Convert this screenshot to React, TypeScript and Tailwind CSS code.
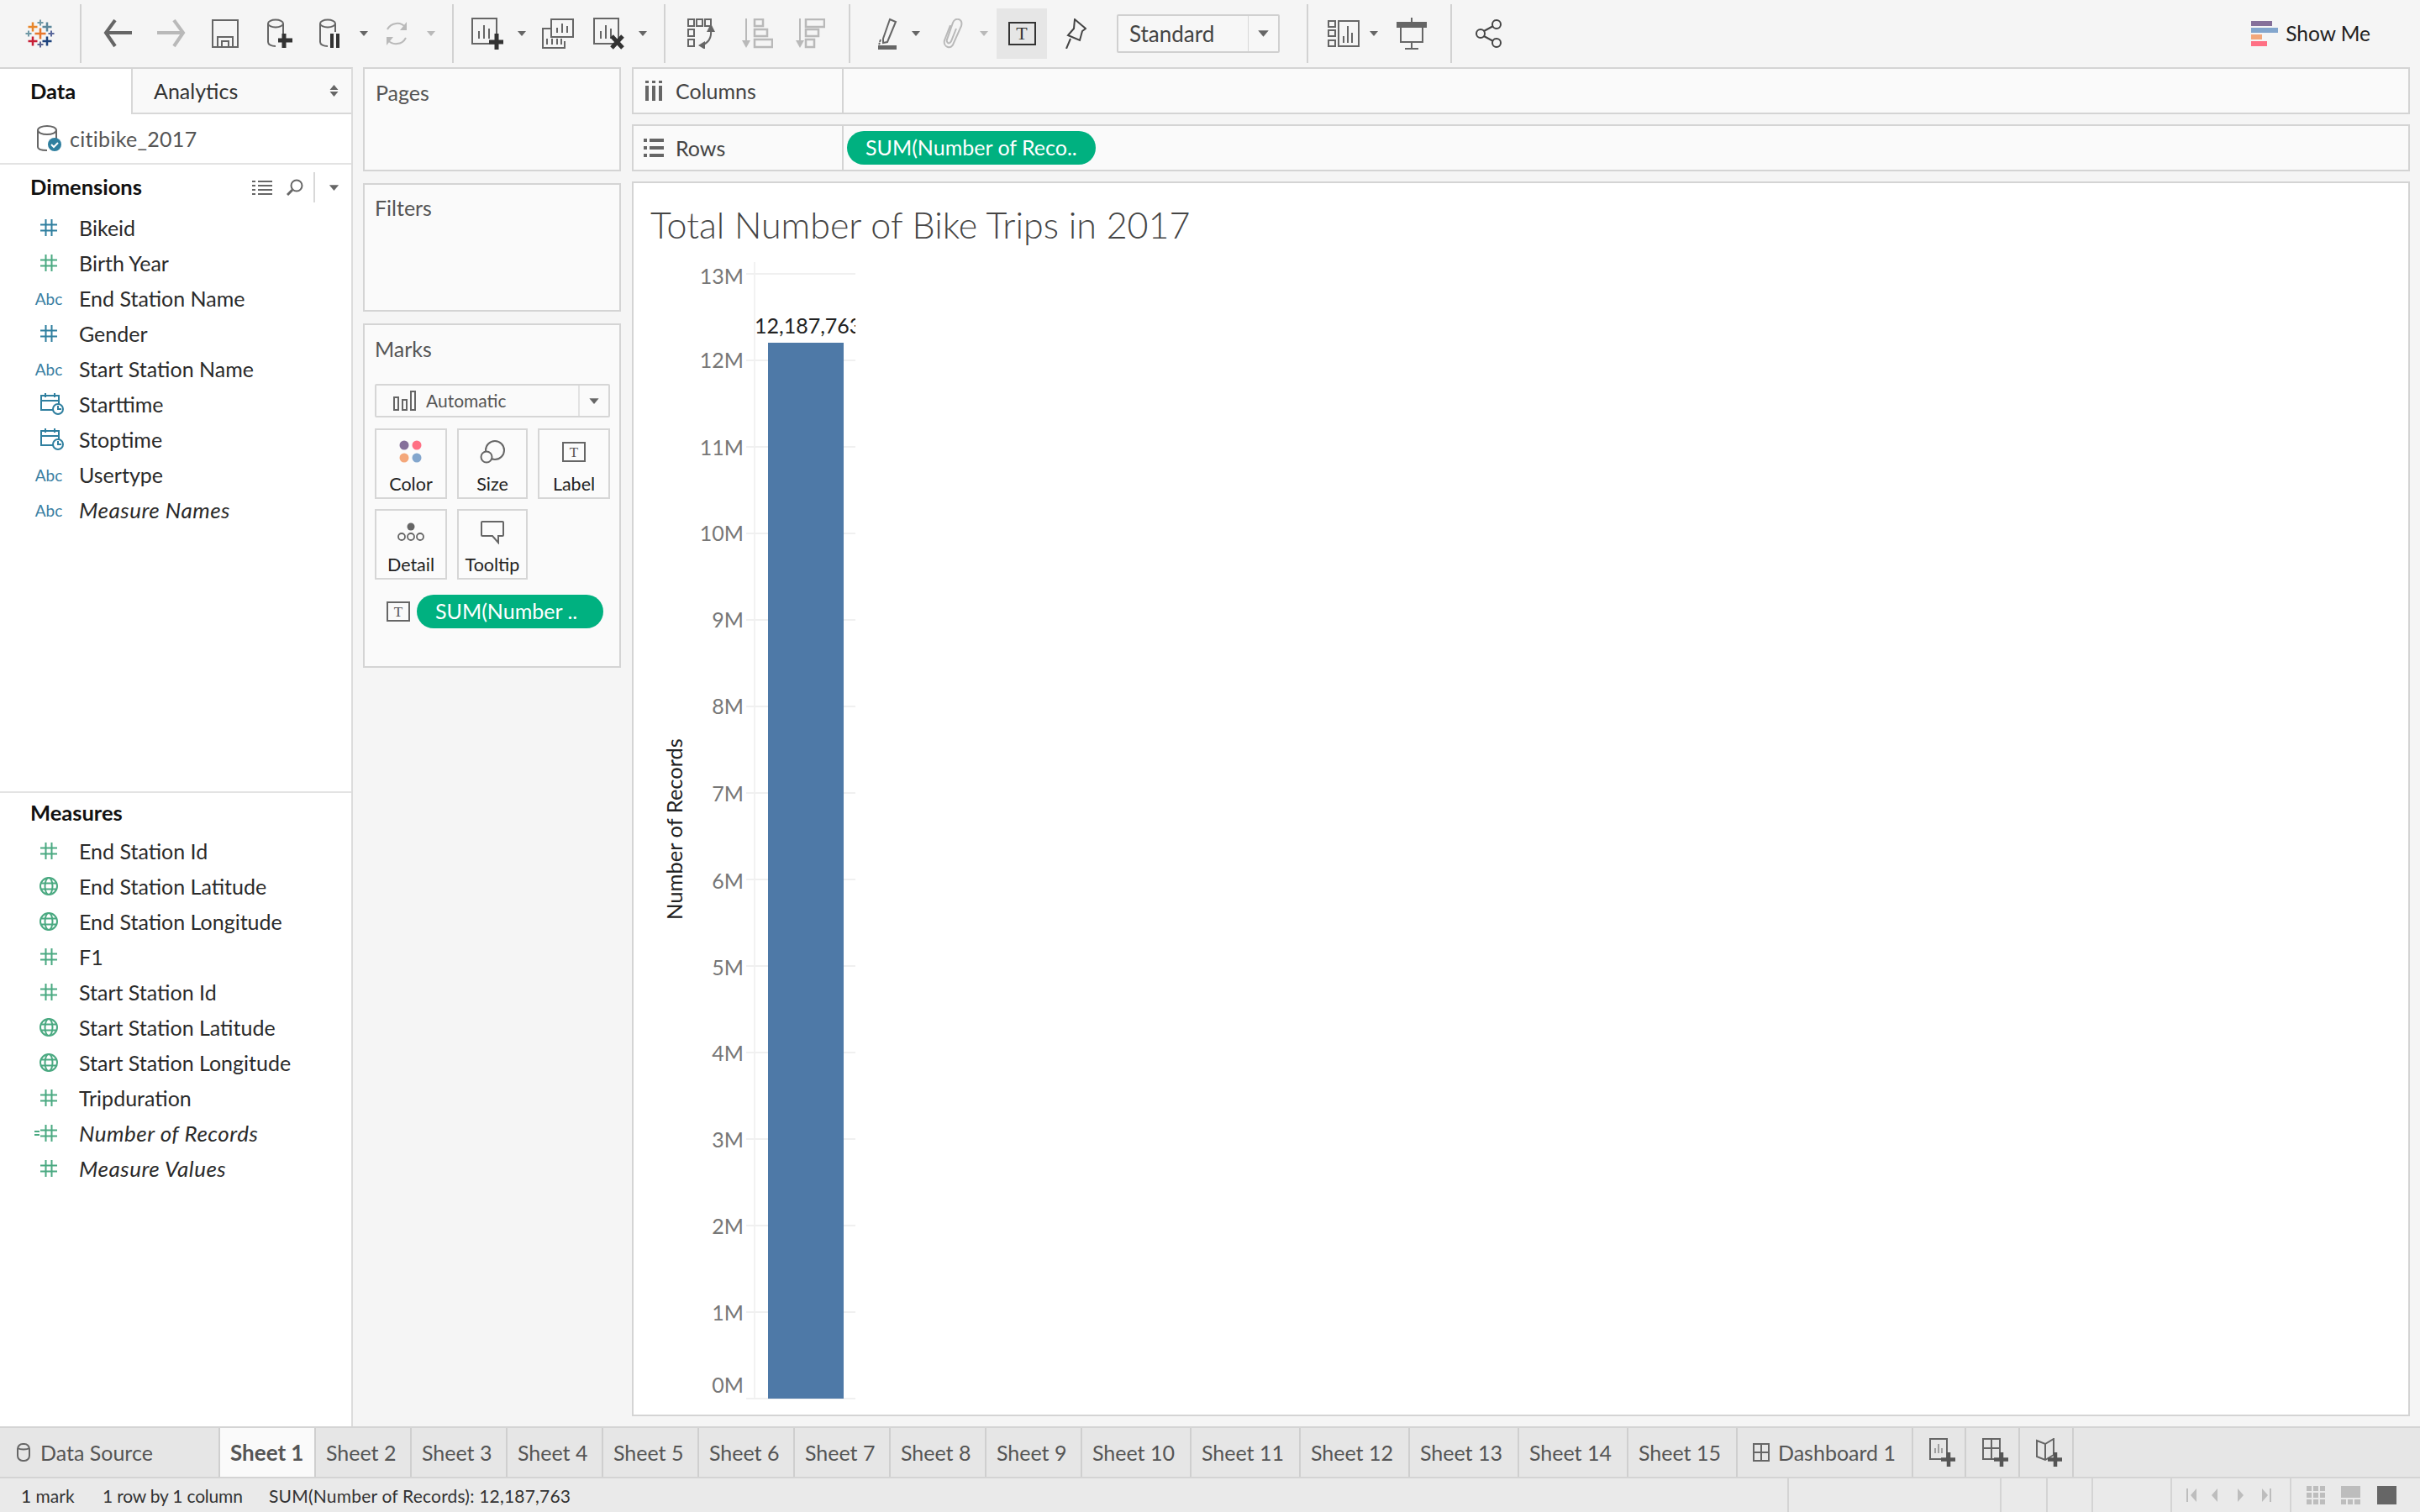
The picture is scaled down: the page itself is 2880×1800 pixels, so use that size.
import React from "react";

const G = "#666666";
const L = "#b9b9b9";

function Caret({ c = G, cls = "" }: { c?: string; cls?: string }) {
  return (
    <svg width="10" height="8" viewBox="0 0 10 8" className={cls}>
      <path d="M0 1h10L5 7z" fill={c} />
    </svg>
  );
}
function Sep({ cls }: { cls: string }) {
  return <div className={"w-[2px] h-[70px] bg-[#d2d2d2] shrink-0 " + cls} />;
}
function Plus({ x, y, r, c, w = 2.5 }: { x: number; y: number; r: number; c: string; w?: number }) {
  return <path d={`M${x - r} ${y}h${2 * r}M${x} ${y - r}v${2 * r}`} stroke={c} strokeWidth={w} fill="none" />;
}
function Logo() {
  return (
    <svg width="36" height="36" viewBox="30 22 36 36" className="ml-[30px] shrink-0">
      <Plus x={48} y={27} r={3.5} c="#7199a6" w={2} />
      <Plus x={39} y={32} r={5.5} c="#e8862b" />
      <Plus x={56} y={32} r={5.5} c="#5b879b" />
      <Plus x={34} y={40} r={3.5} c="#7099a6" w={2} />
      <Plus x={48} y={40} r={6.5} c="#e8762b" />
      <Plus x={61} y={40} r={3.5} c="#59679b" w={2} />
      <Plus x={39} y={49} r={5.5} c="#c72037" />
      <Plus x={56} y={49} r={5.5} c="#1f447e" />
      <Plus x={48} y={53} r={3.5} c="#5b6591" w={2} />
    </svg>
  );
}
function Arrow({ c, flip, cls }: { c: string; flip?: boolean; cls: string }) {
  return (
    <svg width="34" height="34" viewBox="0 0 34 34" className={"shrink-0 " + cls} style={flip ? { transform: "scaleX(-1)" } : undefined}>
      <path d="M34 16H4M14 1L3 16l11 16" stroke={c} strokeWidth="4" fill="none" />
    </svg>
  );
}
function Cyl({ children }: { children: React.ReactNode }) {
  return (
    <svg width="34" height="36" viewBox="0 0 34 36" className="block">
      <ellipse cx="10" cy="6" rx="9" ry="4.5" fill="none" stroke={G} strokeWidth="2" />
      <path d="M1 6v22c0 3 4 5 9 5M19 6v14" fill="none" stroke={G} strokeWidth="2" />
      {children}
    </svg>
  );
}
function Sheet({ children, cls }: { children: React.ReactNode; cls: string }) {
  return (
    <svg width="38" height="38" viewBox="0 0 38 38" className={"shrink-0 " + cls}>
      <rect x="1" y="1" width="29" height="30" fill="none" stroke={G} strokeWidth="2" />
      <path d="M9 25v-9M15 25V9M21 25v-12" stroke={G} strokeWidth="2" />
      {children}
    </svg>
  );
}

function Toolbar() {
  return (
    <div className="h-[80px] flex items-center bg-[#f5f5f5] shrink-0">
      <Logo />
      <Sep cls="ml-[29px]" />
      <Arrow c={G} cls="ml-[26px]" />
      <Arrow c={L} flip cls="ml-[30px]" />
      <svg width="32" height="34" viewBox="0 0 32 34" className="ml-[31px] shrink-0">
        <rect x="1" y="1" width="30" height="32" fill="none" stroke={G} strokeWidth="2" />
        <path d="M7 32V21h18v11M12 32v-6h8v6" fill="none" stroke={G} strokeWidth="2" />
      </svg>
      <div className="ml-[34px] w-[30px] shrink-0">
        <Cyl>
          <path d="M20 18v17M13 26h17" stroke="#333" strokeWidth="5" />
        </Cyl>
      </div>
      <div className="ml-[32px] w-[24px] shrink-0">
        <svg width="26" height="36" viewBox="0 0 26 36" className="block">
          <ellipse cx="10" cy="6" rx="9" ry="4.5" fill="none" stroke={G} strokeWidth="2" />
          <path d="M1 6v22c0 3 4 5 9 5M19 6v10" fill="none" stroke={G} strokeWidth="2" />
          <path d="M15 18v17M22 18v17" stroke="#333" strokeWidth="4" />
        </svg>
      </div>
      <Caret cls="ml-[24px] shrink-0" />
      <svg width="32" height="32" viewBox="0 0 32 32" className="ml-[18px] shrink-0">
        <path d="M5 11A13 13 0 0 1 27 9M27 21A13 13 0 0 1 5 23" fill="none" stroke={L} strokeWidth="2" />
        <path d="M28 2v10h-8zM4 30V20h8z" fill={L} />
      </svg>
      <Caret c={L} cls="ml-[20px] shrink-0" />
      <Sep cls="ml-[20px]" />
      <Sheet cls="ml-[21px]">
        <path d="M30 19v19M21 29h17" stroke="#333" strokeWidth="5" />
      </Sheet>
      <Caret cls="ml-[17px] shrink-0" />
      <svg width="38" height="36" viewBox="0 0 38 36" className="ml-[19px] shrink-0">
        <rect x="11" y="1" width="26" height="21" fill="#f5f5f5" stroke={G} strokeWidth="2" />
        <path d="M18 17v-6M24 17V6M30 17v-8" stroke={G} strokeWidth="2" />
        <path d="M10 12H1v23h26v-8" fill="none" stroke={G} strokeWidth="2" />
        <path d="M6 31v-7M12 31v-7M18 31v-7M23 31v-7" stroke={G} strokeWidth="2" />
      </svg>
      <Sheet cls="ml-[23px]">
        <path d="M22 22l13 14M35 22L22 36" stroke="#333" strokeWidth="5" />
      </Sheet>
      <Caret cls="ml-[16px] shrink-0" />
      <Sep cls="ml-[20px]" />
      <svg width="36" height="36" viewBox="0 0 36 36" className="ml-[26px] shrink-0">
        <g fill="none" stroke={G} strokeWidth="2">
          <rect x="1" y="1" width="7" height="8" /><rect x="11" y="1" width="7" height="8" /><rect x="21" y="1" width="7" height="8" />
          <rect x="1" y="13" width="7" height="8" /><rect x="1" y="25" width="7" height="8" />
          <path d="M28 14c1 9-3 15-11 18" />
        </g>
        <path d="M28 6l5 10h-10zM13 32l8-5v10z" fill={G} />
      </svg>
      <svg width="38" height="36" viewBox="0 0 38 36" className="ml-[28px] shrink-0">
        <path d="M6 0v30" stroke={L} strokeWidth="2" />
        <path d="M1 26h10l-5 9z" fill={L} />
        <g fill="none" stroke={L} strokeWidth="2.5">
          <rect x="16" y="1" width="10" height="8" /><rect x="16" y="13" width="15" height="8" /><rect x="16" y="25" width="21" height="9" />
        </g>
      </svg>
      <svg width="36" height="36" viewBox="0 0 36 36" className="ml-[26px] shrink-0">
        <path d="M6 0v30" stroke={L} strokeWidth="2" />
        <path d="M1 26h10l-5 9z" fill={L} />
        <g fill="none" stroke={L} strokeWidth="2.5">
          <rect x="13" y="1" width="22" height="9" /><rect x="13" y="13" width="15" height="8" /><rect x="13" y="25" width="10" height="9" />
        </g>
      </svg>
      <Sep cls="ml-[28px]" />
      <svg width="24" height="38" viewBox="0 0 24 38" className="ml-[33px] shrink-0">
        <path d="M14 2l7 3-10 24-5 1 0-5z" fill="none" stroke={G} strokeWidth="2" />
        <path d="M3 26l-1 3M2 30l-1 2" stroke={G} strokeWidth="2" />
        <rect x="0" y="33" width="22" height="5" fill={G} />
      </svg>
      <Caret cls="ml-[16px] shrink-0" />
      <svg width="26" height="36" viewBox="0 0 26 36" className="ml-[25px] shrink-0">
        <path d="M11 8L4 26c-1 4 1 7 4 8s6-1 7-5l9-20c1-4 0-7-3-8s-6 1-7 4L7 25c-1 2 0 3 1 4s3 0 4-2l6-15" fill="none" stroke={L} strokeWidth="2" />
      </svg>
      <Caret c={L} cls="ml-[20px] shrink-0" />
      <div className="ml-[10px] w-[60px] h-[60px] bg-[#e6e6e6] flex items-center justify-center shrink-0">
        <div className="w-[33px] h-[28px] border-2 border-[#333] flex items-center justify-center text-[22px] leading-none text-[#333] font-['Liberation_Serif',serif]">T</div>
      </div>
      <svg width="28" height="36" viewBox="0 0 28 36" className="ml-[19px] shrink-0">
        <path d="M14 1l13 11-4 3-3 11-14-6 7-8zM9 24L4 36" fill="none" stroke="#444" strokeWidth="2" />
      </svg>
      <div className="ml-[36px] w-[194px] h-[46px] border-2 border-[#d0d0d0] rounded-[2px] flex items-center shrink-0 bg-[#f7f7f7]">
        <div className="flex-1 pl-[13px] pb-[1px] text-[26px] text-[#444] leading-none">Standard</div>
        <div className="w-[36px] h-full border-l border-[#d8d8d8] flex items-center justify-center">
          <Caret cls="w-[13px] h-[10px]" />
        </div>
      </div>
      <Sep cls="ml-[32px]" />
      <svg width="38" height="32" viewBox="0 0 38 32" className="ml-[23px] shrink-0">
        <g fill="none" stroke={G} strokeWidth="2">
          <rect x="1" y="1" width="8" height="7" /><rect x="1" y="12" width="8" height="7" /><rect x="1" y="24" width="8" height="7" />
          <rect x="13" y="1" width="24" height="30" />
          <path d="M19 27v-8M24 27V7M29 27V15" />
        </g>
      </svg>
      <Caret cls="ml-[12px] shrink-0" />
      <svg width="36" height="38" viewBox="0 0 36 38" className="ml-[22px] shrink-0">
        <rect x="0" y="5" width="36" height="7" fill={G} />
        <path d="M18 0v5M5 12v17h26V12M18 29v8M10 37h16" fill="none" stroke={G} strokeWidth="2" />
      </svg>
      <Sep cls="ml-[28px]" />
      <svg width="32" height="34" viewBox="0 0 32 34" className="ml-[28px] shrink-0">
        <g fill="none" stroke="#444" strokeWidth="2">
          <circle cx="6" cy="17" r="5" /><circle cx="25" cy="6" r="5" /><circle cx="25" cy="28" r="5" />
          <path d="M10 14l11-6M10 20l11 6" />
        </g>
      </svg>
      <div className="ml-auto mr-[59px] flex items-center">
        <div className="flex flex-col gap-[2px] w-[32px] mr-[9px]">
          <div className="h-[6px] w-[25px] bg-[#85709a]" />
          <div className="h-[6px] w-[32px] bg-[#83a6cd]" />
          <div className="h-[6px] w-[13px] bg-[#f4a77a]" />
          <div className="h-[6px] w-[19px] bg-[#ff7084]" />
        </div>
        <span className="text-[24.5px] text-[#222] leading-none">Show Me</span>
      </div>
    </div>
  );
}

function Hash({ c }: { c: string }) {
  return (
    <svg width="20" height="20" viewBox="0 0 20 20" className="block">
      <path d="M0 6.5h20M0 13.5h20M6.5 0v20M13.5 0v20" stroke={c} strokeWidth="2" fill="none" />
    </svg>
  );
}
function Globe() {
  const c = "#4aa981";
  return (
    <svg width="22" height="22" viewBox="0 0 22 22" className="block">
      <g fill="none" stroke={c} strokeWidth="2">
        <circle cx="11" cy="11" r="10" />
        <ellipse cx="11" cy="11" rx="4.5" ry="10" />
        <path d="M1.5 7.5h19M1.5 14.5h19" />
      </g>
    </svg>
  );
}
function Cal() {
  const c = "#2f7f9f";
  return (
    <svg width="28" height="26" viewBox="0 0 28 26" className="block ml-[8px]">
      <g fill="none" stroke={c} strokeWidth="2">
        <path d="M16 20H1V3h21v10M1 9h21M6 0v5M17 0v5" />
        <circle cx="21" cy="19" r="6" fill="#fff" />
        <path d="M21 15v4h4" />
      </g>
    </svg>
  );
}
type F = { t: string; k: "hb" | "hg" | "abc" | "cal" | "globe" | "calc"; i?: boolean };
const dims: F[] = [
  { t: "Bikeid", k: "hb" },
  { t: "Birth Year", k: "hg" },
  { t: "End Station Name", k: "abc" },
  { t: "Gender", k: "hb" },
  { t: "Start Station Name", k: "abc" },
  { t: "Starttime", k: "cal" },
  { t: "Stoptime", k: "cal" },
  { t: "Usertype", k: "abc" },
  { t: "Measure Names", k: "abc", i: true },
];
const meas: F[] = [
  { t: "End Station Id", k: "hg" },
  { t: "End Station Latitude", k: "globe" },
  { t: "End Station Longitude", k: "globe" },
  { t: "F1", k: "hg" },
  { t: "Start Station Id", k: "hg" },
  { t: "Start Station Latitude", k: "globe" },
  { t: "Start Station Longitude", k: "globe" },
  { t: "Tripduration", k: "hg" },
  { t: "Number of Records", k: "calc", i: true },
  { t: "Measure Values", k: "hg", i: true },
];
function FieldRow({ f }: { f: F }) {
  return (
    <div className="h-[42px] flex items-center">
      <div className="ml-[38px] w-[40px] mr-[16px] flex items-center justify-center relative">
        {f.k === "hb" && <Hash c="#2f7f9f" />}
        {f.k === "hg" && <Hash c="#4aa981" />}
        {f.k === "abc" && <span className="text-[19px] text-[#3a80a3] leading-none">Abc</span>}
        {f.k === "cal" && <Cal />}
        {f.k === "globe" && <Globe />}
        {f.k === "calc" && (
          <>
            <div className="w-[6px] h-[6px] border-y-2 border-[#4aa981] mr-[1px] ml-[-7px]" />
            <Hash c="#4aa981" />
          </>
        )}
      </div>
      <span className={"leading-none text-[#2a2a2a] " + (f.i ? "italic text-[26px] tracking-[0.5px]" : "text-[25px]")}>{f.t}</span>
    </div>
  );
}

function Sidebar() {
  return (
    <div className="w-[420px] shrink-0 bg-white border-r-2 border-[#dcdcdc] border-t-2 border-t-[#d4d4d4] flex flex-col">
      <div className="h-[54px] flex shrink-0">
        <div className="w-[156px] pl-[36px] flex items-center text-[25.5px] font-bold text-[#111] leading-none">Data</div>
        <div className="flex-1 bg-[#f9f9f9] border-l-2 border-b-2 border-[#d8d8d8] flex items-center pl-[25px] text-[25px] text-[#333] leading-none">
          Analytics
          <svg width="11" height="14" viewBox="0 0 11 14" className="ml-auto mr-[15px]">
            <path d="M5.5 0l5 6h-10zM5.5 14l5-6h-10z" fill="#666" />
          </svg>
        </div>
      </div>
      <div className="h-[60px] border-b-2 border-[#e3e3e3] flex items-center shrink-0">
        <svg width="30" height="32" viewBox="0 0 30 32" className="ml-[44px] mr-[9px]">
          <g fill="none" stroke="#666" strokeWidth="2">
            <ellipse cx="12" cy="6" rx="11" ry="5" />
            <path d="M1 6v20c0 3 5 4 11 4M23 6v12" />
          </g>
          <circle cx="21" cy="23" r="8" fill="#2f7f9f" />
          <path d="M17 23l3 3 5-5" stroke="#fff" strokeWidth="2" fill="none" />
        </svg>
        <span className="text-[25px] tracking-[0.3px] text-[#555] leading-none">citibike_2017</span>
      </div>
      <div className="h-[748px] shrink-0 border-b-2 border-[#e3e3e3]">
        <div className="h-[54px] flex items-center">
          <span className="ml-[36px] text-[25.5px] font-bold text-[#111] leading-none">Dimensions</span>
          <svg width="24" height="18" viewBox="0 0 24 18" className="ml-auto">
            <path d="M0 2h4M7 2h17M0 7h4M7 7h17M0 12h4M7 12h17M0 17h4M7 17h17" stroke="#666" strokeWidth="2" />
          </svg>
          <svg width="20" height="20" viewBox="0 0 20 20" className="ml-[17px]">
            <circle cx="12" cy="8" r="6.5" fill="none" stroke="#666" strokeWidth="2" />
            <path d="M7 13l-6 6" stroke="#666" strokeWidth="3" />
          </svg>
          <div className="w-[2px] h-[36px] bg-[#d8d8d8] ml-[12px]" />
          <Caret cls="w-[15px] h-[9px] ml-[15px] mr-[13px]" />
        </div>
        {dims.map((f) => (
          <FieldRow key={f.t} f={f} />
        ))}
      </div>
      <div>
        <div className="h-[48px] flex items-center">
          <span className="ml-[36px] text-[25.5px] font-bold text-[#111] leading-none">Measures</span>
        </div>
        {meas.map((f) => (
          <FieldRow key={f.t} f={f} />
        ))}
      </div>
    </div>
  );
}

function MarkBtn({ label, w, children }: { label: string; w: string; children: React.ReactNode }) {
  return (
    <div className={"h-[84px] border-2 border-[#d6d6d6] flex flex-col items-center bg-[#fbfbfb] " + w}>
      <div className="h-[52px] flex items-center justify-center">{children}</div>
      <span className="mt-[2px] text-[21.5px] leading-none text-[#222]">{label}</span>
    </div>
  );
}
function TBox({ w = "w-[28px]", h = "h-[24px]" }: { w?: string; h?: string }) {
  return (
    <div className={"border-2 border-[#666] flex items-center justify-center text-[17px] leading-none text-[#555] font-['Liberation_Serif',serif] " + w + " " + h}>T</div>
  );
}

function Shelves() {
  const box = "border-2 border-[#d4d4d4] bg-[#fafafa]";
  return (
    <div className="w-[307px] ml-[12px] shrink-0 flex flex-col gap-[14px]">
      <div className={box + " h-[124px] pl-[13px] pt-[16px] text-[25px] text-[#555] leading-none"}>Pages</div>
      <div className={box + " h-[153px] pl-[12px] pt-[15px] text-[25px] text-[#555] leading-none"}>Filters</div>
      <div className={box + " h-[410px] pl-[12px] pr-[11px]"}>
        <div className="h-[56px] flex items-center text-[25px] text-[#555] leading-none">Marks</div>
        <div className="mt-[14px] h-[40px] border-2 border-[#d6d6d6] rounded-[2px] flex items-center">
          <svg width="28" height="24" viewBox="0 0 28 24" className="ml-[20px] mr-[11px]">
            <g fill="none" stroke="#666" strokeWidth="2">
              <rect x="1" y="8" width="5" height="15" /><rect x="11" y="11" width="5" height="12" /><rect x="21" y="1" width="5" height="22" />
            </g>
          </svg>
          <span className="text-[21px] pb-[1px] text-[#555] leading-none">Automatic</span>
          <div className="ml-auto w-[36px] h-full border-l-2 border-[#e2e2e2] flex items-center justify-center">
            <Caret cls="w-[14px] h-[9px]" />
          </div>
        </div>
        <div className="flex gap-[12px] mt-[13px]">
          <MarkBtn label="Color" w="w-[86px]">
            <svg width="28" height="28" viewBox="0 0 28 28">
              <circle cx="6" cy="6" r="5.5" fill="#85709a" /><circle cx="21" cy="6" r="5.5" fill="#ff7084" />
              <circle cx="6" cy="21" r="5.5" fill="#f4a77a" /><circle cx="21" cy="21" r="5.5" fill="#83a6cd" />
            </svg>
          </MarkBtn>
          <MarkBtn label="Size" w="w-[84px]">
            <svg width="30" height="28" viewBox="0 0 30 28">
              <circle cx="18" cy="12" r="11" fill="none" stroke="#666" strokeWidth="2" />
              <circle cx="8" cy="20" r="6.5" fill="#fbfbfb" stroke="#666" strokeWidth="2" />
            </svg>
          </MarkBtn>
          <MarkBtn label="Label" w="w-[86px]">
            <TBox />
          </MarkBtn>
        </div>
        <div className="flex gap-[12px] mt-[12px]">
          <MarkBtn label="Detail" w="w-[86px]">
            <svg width="32" height="24" viewBox="0 0 32 24">
              <circle cx="16" cy="5" r="4.5" fill="#666" />
              <g fill="none" stroke="#666" strokeWidth="1.8">
                <circle cx="5" cy="17" r="4" /><circle cx="16" cy="17" r="4" /><circle cx="27" cy="17" r="4" />
              </g>
            </svg>
          </MarkBtn>
          <MarkBtn label="Tooltip" w="w-[84px]">
            <svg width="28" height="28" viewBox="0 0 28 28">
              <path d="M2 1h24a1 1 0 0 1 1 1v15a1 1 0 0 1-1 1h-5v8l-7-8H2a1 1 0 0 1-1-1V2a1 1 0 0 1 1-1z" fill="none" stroke="#666" strokeWidth="2" />
            </svg>
          </MarkBtn>
        </div>
        <div className="flex items-center mt-[18px]">
          <div className="ml-[14px] mr-[8px]">
            <TBox />
          </div>
          <div className="w-[222px] h-[40px] rounded-[20px] bg-[#00b180] text-white text-[25px] leading-none flex items-center pl-[22px] pb-[2px]">SUM(Number ..</div>
        </div>
      </div>
    </div>
  );
}

function Chart() {
  const labels: [string, number][] = [
    ["13M", 329], ["12M", 429], ["11M", 533], ["10M", 635], ["9M", 738], ["8M", 841], ["7M", 945],
    ["6M", 1049], ["5M", 1152], ["4M", 1254], ["3M", 1357], ["2M", 1460], ["1M", 1563], ["0M", 1649],
  ];
  const font = "Lato, sans-serif";
  return (
    <svg viewBox="754 300 2112 1384" className="w-[2112px] h-[1384px] block">
      <defs>
        <clipPath id="lab">
          <rect x="896" y="360" width="122" height="48" />
        </clipPath>
      </defs>
      <path d="M898 312V1665" stroke="#f2f2f2" strokeWidth="2" />
      {Array.from({ length: 14 }).map((_, i) => (
        <path key={i} d={`M888 ${326 + i * 103}H1018`} stroke="#f0f0f0" strokeWidth="2" />
      ))}
      <rect x="914" y="408" width="90" height="1257" fill="#4e79a7" />
      {labels.map(([t, y]) => (
        <text key={t} x="885" y={y + 9} textAnchor="end" fontFamily={font} fontSize="25" fill="#777">
          {t}
        </text>
      ))}
      <g clipPath="url(#lab)">
        <text x="898" y="397" fontFamily={font} fontSize="25" fill="#222">12,187,763</text>
      </g>
      <text x="0" y="0" transform="translate(812 987) rotate(-90)" textAnchor="middle" fontFamily={font} fontSize="25.5" fill="#222">
        Number of Records
      </text>
    </svg>
  );
}

function Canvas() {
  const box = "h-[56px] border-2 border-[#d4d4d4] bg-[#fafafa] flex items-center";
  return (
    <div className="w-[2116px] ml-[13px] shrink-0 flex flex-col gap-[12px]">
      <div className={box}>
        <div className="w-[250px] h-full border-r-2 border-[#d4d4d4] flex items-center shrink-0">
          <svg width="20" height="24" viewBox="0 0 20 24" className="ml-[14px] mr-[16px]">
            <path d="M0 0h4v3H0zM8 0h4v3H8zM16 0h4v3h-4zM0 6h4v18H0zM8 6h4v18H8zM16 6h4v18h-4z" fill="#666" />
          </svg>
          <span className="text-[25px] text-[#444] leading-none">Columns</span>
        </div>
      </div>
      <div className={box}>
        <div className="w-[250px] h-full border-r-2 border-[#d4d4d4] flex items-center shrink-0">
          <svg width="24" height="22" viewBox="0 0 24 22" className="ml-[12px] mr-[14px]">
            <path d="M0 0h4v4H0zM7 0h17v4H7zM0 9h4v4H0zM7 9h17v4H7zM0 18h4v4H0zM7 18h17v4H7z" fill="#666" />
          </svg>
          <span className="text-[25px] text-[#444] leading-none">Rows</span>
        </div>
        <div className="ml-[4px] w-[296px] h-[40px] rounded-[20px] bg-[#00b180] text-white text-[25px] leading-none flex items-center pl-[22px] pb-[2px]">SUM(Number of Reco..</div>
      </div>
      <div className="h-[1470px] border-2 border-[#d4d4d4] bg-white">
        <div className="h-[82px] pl-[20px] pt-[28px] text-[43px] font-light text-[#444] leading-none">Total Number of Bike Trips in 2017</div>
        <Chart />
      </div>
    </div>
  );
}

function Tab({ w, children, active }: { w: string; children: React.ReactNode; active?: boolean }) {
  return (
    <div className={"h-full border-r-2 border-[#cfcfcf] flex items-center shrink-0 leading-none " + w + (active ? " bg-[#fafafa] font-bold text-[#555] text-[26px]" : " text-[#555] text-[25px]")}>
      {children}
    </div>
  );
}
function AddIcon({ d }: { d: React.ReactNode }) {
  return (
    <svg width="32" height="34" viewBox="0 0 32 34" className="ml-[19px]">
      {d}
      <path d="M23 17v17M14 25.5h17" stroke="#555" strokeWidth="4.5" />
    </svg>
  );
}

export default function App() {
  const s = ["2", "3", "4", "5", "6", "7", "8", "9"];
  const t = ["10", "11", "12", "13", "14", "15"];
  return (
    <div className="w-[2880px] h-[1800px] flex flex-col bg-[#f5f5f5] overflow-hidden font-['Lato',sans-serif]">
      <Toolbar />
      <div className="h-[1618px] flex shrink-0">
        <Sidebar />
        <Shelves />
        <Canvas />
      </div>
      <div className="h-[62px] bg-[#e6e6e6] border-t-2 border-b-2 border-[#d4d4d4] flex shrink-0">
        <Tab w="w-[262px]">
          <svg width="16" height="22" viewBox="0 0 16 22" className="ml-[20px] mr-[12px]">
            <g fill="none" stroke="#666" strokeWidth="2">
              <rect x="1" y="1" width="14" height="20" rx="6" />
              <path d="M1 6c3 2 11 2 14 0" />
            </g>
          </svg>
          Data Source
        </Tab>
        <Tab w="w-[114px] pl-[12px]" active>Sheet 1</Tab>
        {s.map((n) => (
          <Tab key={n} w="w-[114px] pl-[12px]">Sheet {n}</Tab>
        ))}
        {t.map((n) => (
          <Tab key={n} w="w-[130px] pl-[12px]">Sheet {n}</Tab>
        ))}
        <Tab w="w-[209px]">
          <svg width="20" height="22" viewBox="0 0 20 22" className="ml-[18px] mr-[10px]">
            <path d="M1 1h18v20H1zM10 1v20M1 11h18" fill="none" stroke="#666" strokeWidth="2" />
          </svg>
          Dashboard 1
        </Tab>
        <Tab w="w-[63px]">
          <AddIcon d={<><rect x="1" y="1" width="20" height="24" fill="none" stroke="#666" strokeWidth="2" /><path d="M7 18v-6M11 18V7M15 18v-6" stroke="#888" strokeWidth="1.5" /></>} />
        </Tab>
        <Tab w="w-[64px]">
          <AddIcon d={<path d="M1 1h20v24H1zM11 1v24M1 12h20" fill="none" stroke="#666" strokeWidth="2" />} />
        </Tab>
        <Tab w="w-[64px]">
          <AddIcon d={<path d="M1 3l10 4 10-6v19l-10 6-10-4zM11 7v19" fill="none" stroke="#666" strokeWidth="2" />} />
        </Tab>
      </div>
      <div className="flex-1 bg-[#eaeaea] flex text-[21px] text-[#333] leading-none">
        <div className="w-[2129px] border-r-2 border-[#d4d4d4] flex items-center pl-[25px] shrink-0">
          <span className="w-[97px]">1 mark</span>
          <span className="w-[198px] tracking-[-0.2px]">1 row by 1 column</span>
          <span className="tracking-[0.2px]">SUM(Number of Records): 12,187,763</span>
        </div>
        <div className="w-[253px] border-r-2 border-[#d4d4d4] shrink-0" />
        <div className="w-[55px] border-r-2 border-[#d4d4d4] shrink-0" />
        <div className="w-[54px] border-r-2 border-[#d4d4d4] shrink-0" />
        <div className="w-[94px] border-r-2 border-[#d4d4d4] shrink-0" />
        <div className="w-[142px] border-r-2 border-[#d4d4d4] shrink-0 flex items-center">
          <svg width="112" height="20" viewBox="0 0 112 20" className="ml-[16px]" fill="#bdbdbd">
            <path d="M1 2h2v16H1zM13 2v16L6 10zM38 2v16l-7-8zM62 2v16l7-8zM91 2v16l7-8zM100 2h2v16h-2z" />
          </svg>
        </div>
        <div className="flex-1 flex items-center">
          <svg width="22" height="22" viewBox="0 0 22 22" className="ml-[18px]" fill="#bdbdbd">
            <path d="M0 0h6v6H0zM8 0h6v6H8zM16 0h6v6h-6zM0 8h6v6H0zM8 8h6v6H8zM16 8h6v6h-6zM0 16h6v6H0zM8 16h6v6H8zM16 16h6v6h-6z" />
          </svg>
          <svg width="23" height="22" viewBox="0 0 23 22" className="ml-[19px]" fill="#bdbdbd">
            <path d="M0 0h23v14H0zM0 16h6v6H0zM8 16h6v6H8zM16 16h7v6h-7z" />
          </svg>
          <div className="w-[23px] h-[22px] bg-[#666] ml-[20px]" />
        </div>
      </div>
    </div>
  );
}
